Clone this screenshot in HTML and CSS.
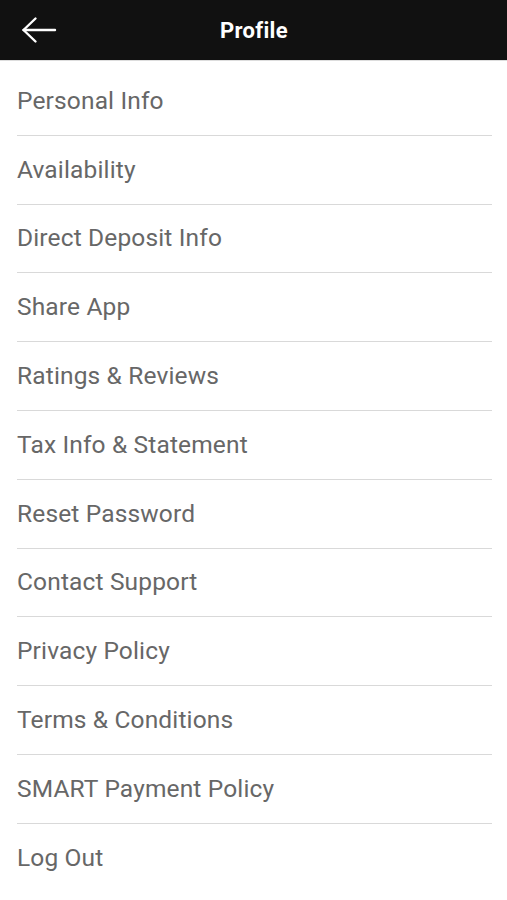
FILE: index.html
```html
<!DOCTYPE html>
<html>
<head>
<meta charset="utf-8">
<link rel="stylesheet" href="styles.css">
</head>
<body>
<header class="topbar">
  <button class="back" aria-label="Back">
    <svg width="36" height="28" viewBox="0 0 36 28" fill="none" stroke="#fff" stroke-width="2.4" stroke-linecap="round" stroke-linejoin="round">
      <path d="M34 14H2.5"/>
      <path d="M14.5 2.5L2.5 14l12 11.5"/>
    </svg>
  </button>
  <h1 class="title">Profile</h1>
</header>
<ul class="menu">
  <li class="item">Personal Info</li>
  <li class="item">Availability</li>
  <li class="item">Direct Deposit Info</li>
  <li class="item">Share App</li>
  <li class="item">Ratings &amp; Reviews</li>
  <li class="item">Tax Info &amp; Statement</li>
  <li class="item">Reset Password</li>
  <li class="item">Contact Support</li>
  <li class="item">Privacy Policy</li>
  <li class="item">Terms &amp; Conditions</li>
  <li class="item">SMART Payment Policy</li>
  <li class="item">Log Out</li>
</ul>
</body>
</html>
```

FILE: styles.css
```css
* { box-sizing: border-box; }
html, body { margin: 0; padding: 0; background: #fff; }
body { font-family: Roboto, "Noto Sans", sans-serif; width: 507px; }
.topbar {
  height: 61px;
  background: #111;
  display: flex;
  align-items: center;
  justify-content: center;
  position: relative;
  border-bottom: 1px solid #ddd;
}
.back {
  position: absolute;
  left: 21px;
  top: 16px;
  background: none;
  border: 0;
  padding: 0;
  display: flex;
}
.title {
  margin: 0;
  color: #fff;
  font-size: 22px;
  font-weight: 700;
  letter-spacing: 0.3px;
  padding-left: 1px;
}
.menu {
  list-style: none;
  margin: 0;
  padding: 6px 15px 0 17px;
}
.item {
  height: 68.8px;
  display: flex;
  align-items: center;
  font-size: 24.5px;
  letter-spacing: 0.15px;
  color: #676767;
  border-bottom: 1px solid #d9d9d9;
  padding-bottom: 1px;
}
.item:last-child { border-bottom: 0; }
```
